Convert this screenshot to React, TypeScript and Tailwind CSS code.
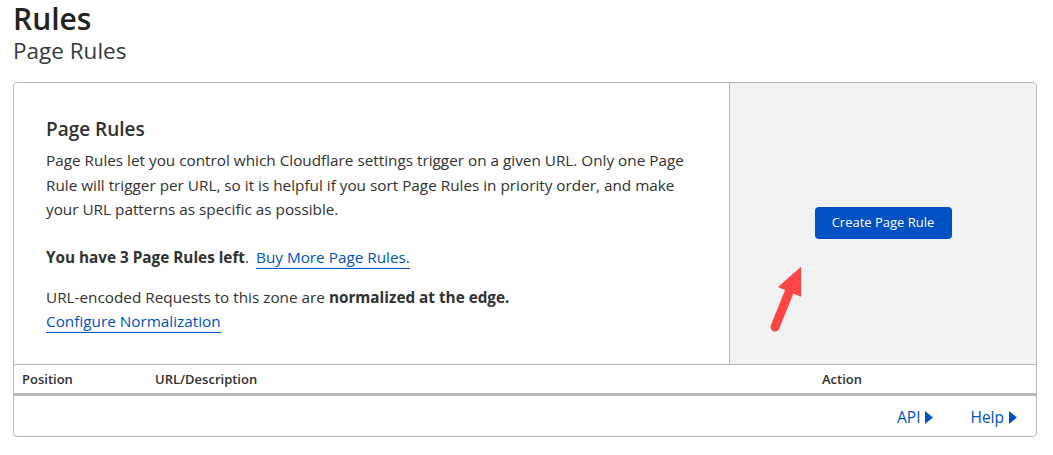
import React from "react";

function Tri() {
  return (
    <svg width="8" height="13" viewBox="0 0 8 13" className="inline-block ml-[5px]">
      <path d="M0 0 L8 6.5 L0 13 Z" fill="#0051c3" />
    </svg>
  );
}

export default function App() {
  return (
    <div
      className="min-h-[455px] w-[1053px] bg-white text-[#313131] px-[13px] pt-[1px]"
      style={{ fontFamily: '"Open Sans", "Noto Sans", sans-serif' }}
    >
      <h1 className="text-[30px] font-semibold leading-[36px] text-[#222]">Rules</h1>
      <h2 className="text-[22.5px] leading-[30px] text-[#36393a] mt-[-1px]">Page Rules</h2>
      <div className="relative mt-[16px] w-[1024px] border border-[#b8b8b8] rounded-[4px] overflow-hidden">
        <div className="flex border-b border-[#b8b8b8]">
          <div className="w-[716px] pl-[32px] pr-[30px] pt-[32px] pb-[31px] border-r border-[#b8b8b8]">
            <div className="text-[19px] font-semibold leading-[28px]">Page Rules</div>
            <p className="text-[15.3px] leading-[24.5px] mt-[5px]">
              Page Rules let you control which Cloudflare settings trigger on a given URL. Only one Page Rule will trigger per URL, so it is helpful if you sort Page Rules in priority order, and make your URL patterns as specific as possible.
            </p>
            <p className="text-[15.3px] leading-[24px] mt-[23px]">
              <span className="font-bold">You have 3 Page Rules left</span>.{" "}
              <a className="ml-[3px] text-[#0051c3] border-b border-[#0051c3] pb-[1px]">Buy More Page Rules.</a>
            </p>
            <p className="text-[15.3px] leading-[24px] mt-[16px]">
              URL-encoded Requests to this zone are <span className="font-bold">normalized at the edge.</span>
              <br />
              <a className="text-[#0051c3] border-b border-[#0051c3] pb-[1px]">Configure Normalization</a>
            </p>
          </div>
          <div className="flex-1 bg-[#f2f2f2] flex items-center justify-center">
            <button className="bg-[#0051c3] text-white text-[13px] rounded-[4px] w-[137px] h-[32px] mb-[1px]">
              Create Page Rule
            </button>
          </div>
        </div>
        <div className="flex h-[31px] pt-[3px] items-center text-[13px] font-semibold border-b-[3px] border-[#b8b8b8]">
          <div className="w-[133px] pl-[8px]">Position</div>
          <div className="w-[675px] pl-[8px]">URL/Description</div>
          <div>Action</div>
        </div>
        <div className="h-[40px] pt-[4px] flex items-center justify-end pr-[19px] text-[15.5px] text-[#0051c3]">
          <a className="flex items-center">API<Tri /></a>
          <a className="flex items-center ml-[37px]">Help<Tri /></a>
        </div>
        <svg className="absolute left-[737px] top-[175px]" width="50" height="80" viewBox="750 258 50 80">
          <line x1="774" y1="327" x2="791" y2="285" stroke="#ff4545" strokeWidth="9" strokeLinecap="round" />
          <path d="M803 264 L777 287 L803 298 Z" fill="#ff4545" />
        </svg>
      </div>
    </div>
  );
}
